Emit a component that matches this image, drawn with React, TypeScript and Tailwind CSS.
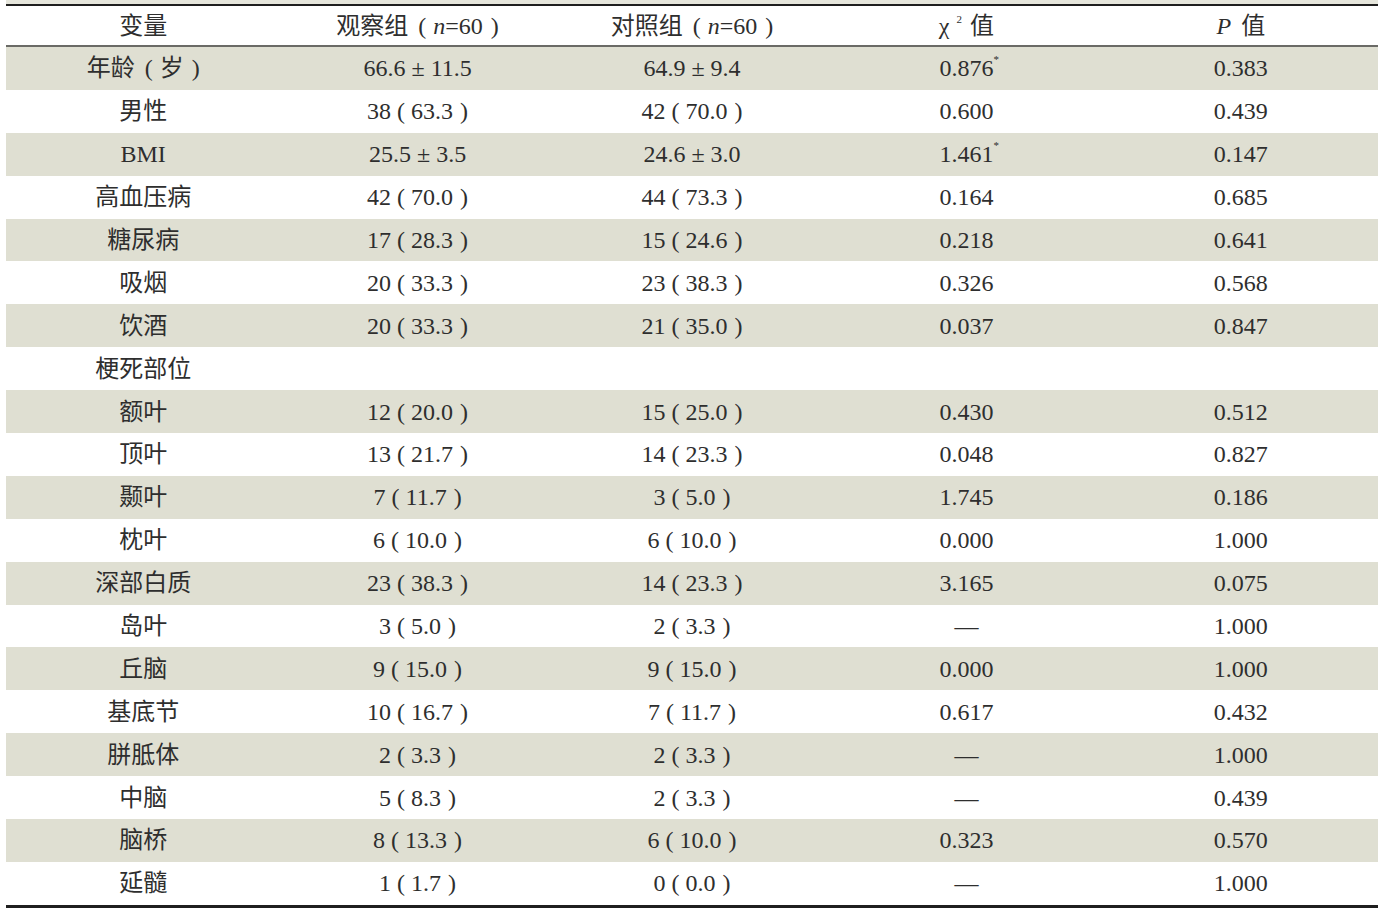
import React from 'react';

type Row = {
  label: string;
  obs?: string;
  ctl?: string;
  chi?: string;
  star?: boolean;
  p?: string;
};

const rows: Row[] = [
  { label: '年龄（岁）', obs: '66.6 ± 11.5', ctl: '64.9 ± 9.4', chi: '0.876', star: true, p: '0.383' },
  { label: '男性', obs: '38（63.3）', ctl: '42（70.0）', chi: '0.600', p: '0.439' },
  { label: 'BMI', obs: '25.5 ± 3.5', ctl: '24.6 ± 3.0', chi: '1.461', star: true, p: '0.147' },
  { label: '高血压病', obs: '42（70.0）', ctl: '44（73.3）', chi: '0.164', p: '0.685' },
  { label: '糖尿病', obs: '17（28.3）', ctl: '15（24.6）', chi: '0.218', p: '0.641' },
  { label: '吸烟', obs: '20（33.3）', ctl: '23（38.3）', chi: '0.326', p: '0.568' },
  { label: '饮酒', obs: '20（33.3）', ctl: '21（35.0）', chi: '0.037', p: '0.847' },
  { label: '梗死部位' },
  { label: '额叶', obs: '12（20.0）', ctl: '15（25.0）', chi: '0.430', p: '0.512' },
  { label: '顶叶', obs: '13（21.7）', ctl: '14（23.3）', chi: '0.048', p: '0.827' },
  { label: '颞叶', obs: '7（11.7）', ctl: '3（5.0）', chi: '1.745', p: '0.186' },
  { label: '枕叶', obs: '6（10.0）', ctl: '6（10.0）', chi: '0.000', p: '1.000' },
  { label: '深部白质', obs: '23（38.3）', ctl: '14（23.3）', chi: '3.165', p: '0.075' },
  { label: '岛叶', obs: '3（5.0）', ctl: '2（3.3）', chi: '—', p: '1.000' },
  { label: '丘脑', obs: '9（15.0）', ctl: '9（15.0）', chi: '0.000', p: '1.000' },
  { label: '基底节', obs: '10（16.7）', ctl: '7（11.7）', chi: '0.617', p: '0.432' },
  { label: '胼胝体', obs: '2（3.3）', ctl: '2（3.3）', chi: '—', p: '1.000' },
  { label: '中脑', obs: '5（8.3）', ctl: '2（3.3）', chi: '—', p: '0.439' },
  { label: '脑桥', obs: '8（13.3）', ctl: '6（10.0）', chi: '0.323', p: '0.570' },
  { label: '延髓', obs: '1（1.7）', ctl: '0（0.0）', chi: '—', p: '1.000' },
];

const cell = 'flex items-center justify-center whitespace-pre';

// "38（63.3）" -> 38 ( 63.3 ) with the loose spacing of the printed table
function Paren({ text }: { text?: string }) {
  if (!text) return null;
  const m = text.match(/^(.*)（(.*)）$/);
  if (!m) return <>{text}</>;
  return (
    <>
      {m[1]}
      <span className="ml-[6px] mr-[6px]">(</span>
      {m[2]}
      <span className="ml-[7px]">)</span>
    </>);

}

export default function App() {
  return (
    <div
      className="w-[1378px] h-[912px] bg-white pl-[6px] text-[24px] text-[#2e2e2e] overflow-hidden"
      style={{ fontFamily: '"Liberation Serif", "Noto Sans CJK SC", serif' }}>
      <div className="h-[4px] bg-[#e6e6dc]" />
      <div className="grid grid-cols-5 h-[43px] border-t-2 border-b-2 border-t-[#1f1f1f] border-b-[#6a6a66]">
        <div className={cell}>变量</div>
        <div className={cell}>
          观察组<span className="ml-[10px] mr-[7px]">(</span><i>n</i>=60<span className="ml-[8px]">)</span>
        </div>
        <div className={cell}>
          对照组<span className="ml-[10px] mr-[7px]">(</span><i>n</i>=60<span className="ml-[8px]">)</span>
        </div>
        <div className={cell}>
          <span>χ</span>
          <sup className="text-[11px] -top-[7px] ml-[7px] mr-[8px]">2</sup>
          <span>值</span>
        </div>
        <div className={cell}>
          <i className="mr-[10px]">P</i>值
        </div>
      </div>

      {rows.map((r, i) =>
      <div
        key={r.label}
        className={`grid grid-cols-5 h-[42.9px] ${i % 2 === 0 ? 'bg-[#dfdfd2]' : 'bg-white'}`}>

          <div className={cell}>
            {r.label === '年龄（岁）' ?
          <>
                年龄<span className="ml-[10px] mr-[7px]">(</span>岁<span className="ml-[8px]">)</span>
              </> :

          r.label
          }
          </div>
          <div className={cell}><Paren text={r.obs} /></div>
          <div className={cell}><Paren text={r.ctl} /></div>
          <div className={cell}>
            {r.chi}
            {r.star && <sup className="text-[11px] -top-[9px] w-0">*</sup>}
          </div>
          <div className={cell}>{r.p}</div>
        </div>
      )}

      <div className="h-[3px] bg-[#1f1f1f]" />
    </div>);

}
